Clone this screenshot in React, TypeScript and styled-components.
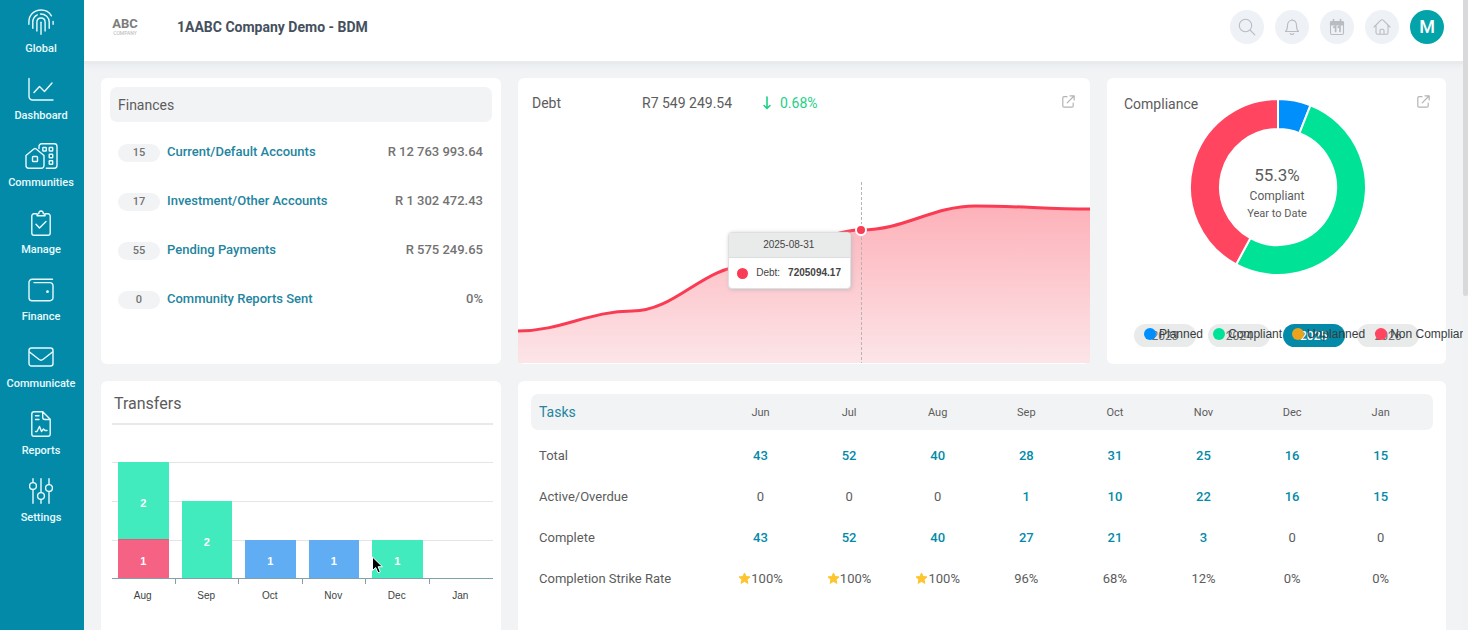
import React from 'react';
import styled, { createGlobalStyle } from 'styled-components';

const teal = '#038aa8';
const linkTeal = '#2385a0';
const ink = '#5c5c5c';
const ui = 'Roboto, "Liberation Sans", sans-serif';
const chartFont = '"Liberation Sans", Arial, sans-serif';

const GlobalStyle = createGlobalStyle`
  *, *::before, *::after { box-sizing: border-box; }
  body { margin: 0; background: #f1f3f5; font-family: ${ui}; color: ${ink}; }
  button { font: inherit; border: 0; padding: 0; cursor: pointer; }
  a { text-decoration: none; color: inherit; }
  h1, h2, p, ul { margin: 0; padding: 0; }
  ul { list-style: none; }
`;

const Shell = styled.div`
  display: flex;
  height: 100vh;
  overflow: hidden;
`;

const Sidebar = styled.nav`
  flex: none;
  width: 84px;
  background: ${teal};
  color: #e9fbff;
`;

const NavLink = styled.a`
  display: flex;
  flex-direction: column;
  align-items: center;
  gap: 7px;
  height: 67px;
  padding-top: 9px;
  padding-right: 2px;
  font-size: 11px;
  line-height: 14px;
  font-weight: 500;
  svg { height: 26px; flex: none; }
`;

const Page = styled.div`
  flex: 1;
  min-width: 0;
  display: flex;
  flex-direction: column;
  overflow: hidden;
`;

const TopBar = styled.header`
  flex: none;
  display: flex;
  align-items: center;
  height: 61px;
  padding: 0 19px 8px 28px;
  background: #fff;
  box-shadow: 0 3px 0 #e9eaeb, 0 4px 6px #e6e8ec;
`;

const Logo = styled.div`
  width: 26px;
  text-align: center;
  color: #7c7c7c;
  strong { display: block; font-size: 13px; line-height: 14px; }
  span { display: block; font-size: 5px; line-height: 5px; color: #b5b5b5; }
`;

const CompanyName = styled.h1`
  flex: 1;
  margin-left: 39px;
  font-size: 14px;
  line-height: 18px;
  font-weight: 700;
  color: #45505e;
`;

const Actions = styled.div`
  display: flex;
  gap: 11px;
`;

const RoundButton = styled.button<{ $avatar?: boolean }>`
  display: grid;
  place-items: center;
  width: 34px;
  height: 34px;
  border-radius: 50%;
  background: ${p => (p.$avatar ? '#02a4a9' : '#eef1f5')};
  color: ${p => (p.$avatar ? '#fff' : '#b9bdc1')};
  font-size: 18px;
  font-weight: 500;
`;

const Board = styled.main`
  display: grid;
  grid-template-columns: minmax(0, 400fr) minmax(0, 572fr) minmax(0, 339fr);
  grid-template-rows: 286px 286px;
  gap: 17px;
  padding: 17px;
`;

const Card = styled.section<{ $wide?: boolean }>`
  position: relative;
  display: flex;
  flex-direction: column;
  border-radius: 6px;
  background: #fff;
  min-width: 0;
  ${p => p.$wide && 'grid-column: span 2; padding: 13px;'}
`;

const CardTitle = styled.h2`
  font-size: 14px;
  line-height: 18px;
  font-weight: 400;
`;

const Band = styled(CardTitle)`
  margin: 9px 9px 6px;
  padding: 9px 8px 8px;
  border-radius: 7px;
  background: #f2f3f5;
`;

const AccountRow = styled.li`
  display: flex;
  align-items: center;
  gap: 7px;
  height: 49px;
  padding: 0 18px 0 17px;
  font-size: 13px;
  line-height: 16px;
  font-weight: 500;
  color: #737373;
  a { flex: 1; color: ${linkTeal}; padding-bottom: 2px; }
`;

const Amount = styled.span`
  padding-bottom: 2px;
`;

const Count = styled.span`
  width: 42px;
  border-radius: 9px;
  background: #f2f3f5;
  text-align: center;
  font-size: 11px;
  line-height: 18px;
`;

const DebtHeader = styled.div`
  display: flex;
  align-items: center;
  padding: 14px 15px 0 14px;
  font-size: 14px;
  line-height: 22px;
  height: 36px;
`;

const DebtTitle = styled(CardTitle)`
  width: 110px;
`;

const DebtAmount = styled.span`
  width: 120px;
`;

const Change = styled.span`
  flex: 1;
  display: flex;
  align-items: center;
  gap: 8px;
  color: #1cd087;
`;

const OpenLink = styled.a`
  display: block;
  height: 16px;
  color: #b4b4b4;
  svg { display: block; }
`;

const AreaChart = styled.div`
  position: relative;
  margin-top: auto;
  height: 181px;
  margin-bottom: 1px;
  > svg { display: block; width: 100%; height: 100%; }
`;

const Guide = styled.div`
  position: absolute;
  left: 60%;
  top: 0;
  bottom: 0;
  width: 1px;
  background: repeating-linear-gradient(#b9b3b6 0 3px, transparent 3px 5px);
`;

const Marker = styled.div`
  position: absolute;
  left: 60%;
  top: 48px;
  width: 12px;
  height: 12px;
  margin: -6px;
  border: 2px solid #fff;
  border-radius: 50%;
  background: #fa3b54;
`;

const Tooltip = styled.div`
  position: absolute;
  right: calc(40% + 10px);
  top: 50px;
  width: 123px;
  border: 1px solid #dfe0e0;
  border-radius: 4px;
  background: #fff;
  box-shadow: 1px 1px 4px #c9bcc0;
  overflow: hidden;
  font-family: ${chartFont};
  font-size: 10px;
  color: #444;
`;

const TooltipDate = styled.div`
  padding: 0 2px 0 0;
  background: #e9ebeb;
  border-bottom: 1px solid #dcdede;
  text-align: center;
  line-height: 24px;
`;

const TooltipValue = styled.div`
  display: flex;
  align-items: center;
  gap: 8px;
  padding-left: 8px;
  line-height: 30px;
  strong { font-weight: 700; }
`;

const Dot = styled.i<{ $color: string; $size: number }>`
  flex: none;
  width: ${p => p.$size}px;
  height: ${p => p.$size}px;
  border-radius: 50%;
  background: ${p => p.$color};
`;

const ComplianceTop = styled.div`
  display: grid;
  grid-template-columns: minmax(0, 1fr) 180px minmax(0, 1fr);
  padding: 17px 16px 0 17px;
  ${OpenLink} { justify-self: end; }
  ${CardTitle} { white-space: nowrap; }
`;

const Donut = styled.div`
  position: relative;
  height: 182px;
  svg { display: block; }
`;

const DonutLabel = styled.div`
  position: absolute;
  inset: 69px 0 0;
  text-align: center;
  font-size: 12px;
  line-height: 20px;
  strong { display: block; font-size: 17px; font-weight: 400; line-height: 22px; }
  span { display: block; font-size: 11px; line-height: 16px; }
`;

const Years = styled.div`
  display: flex;
  justify-content: space-between;
  margin: auto 27px 17px;
`;

const YearButton = styled.button<{ $active?: boolean }>`
  width: 62px;
  height: 23px;
  border-radius: 12px;
  background: ${p => (p.$active ? teal : '#e9ebeb')};
  color: ${p => (p.$active ? '#fff' : '#6d6d6d')};
  font-size: 12px;
  font-weight: ${p => (p.$active ? 500 : 400)};
`;

const Legend = styled.ul`
  position: absolute;
  left: 37px;
  bottom: 23px;
  display: flex;
  gap: 10px;
  font-family: ${chartFont};
  font-size: 12px;
  line-height: 14px;
  color: #373d3f;
  white-space: nowrap;
  li { display: flex; align-items: center; gap: 3px; }
`;

const TransfersTitle = styled.h2`
  margin: 0 8px 0 11px;
  padding: 13px 2px 10px;
  border-bottom: 2px solid #e8e9ea;
  font-size: 16px;
  line-height: 19px;
  font-weight: 400;
`;

const BarChart = styled.div`
  position: relative;
  margin: 37px 8px 0 11px;
  font-family: ${chartFont};
  font-size: 10px;
`;

const Plot = styled.div`
  display: flex;
  align-items: flex-end;
  height: 117px;
  border-bottom: 1px solid #7fa3ae;
  background: repeating-linear-gradient(#e3e5e6 0 1px, transparent 1px 39px);
`;

const Stack = styled.div`
  flex: 1;
  padding: 0 7px 0 6px;
`;

const Bar = styled.div<{ $color: string; $units: number }>`
  height: ${p => p.$units * 39 - 1}px;
  display: grid;
  place-items: center;
  padding-top: 4px;
  background: ${p => p.$color};
  color: #fff;
  font-size: 11px;
  font-weight: 700;
  & + & { border-top: 1px solid #d8607c; height: ${p => p.$units * 39}px; }
`;

const Axis = styled.div`
  display: flex;
`;

const AxisLabel = styled.span`
  position: relative;
  flex: 1;
  padding: 10px 2px 0 0;
  text-align: center;
  line-height: 14px;
  color: #3b3f42;
  &:not(:last-child)::after {
    content: '';
    position: absolute;
    right: 0;
    top: 0;
    width: 1px;
    height: 5px;
    background: #8f9da3;
  }
`;

const Pointer = styled.svg`
  position: absolute;
  left: 68%;
  top: 93px;
`;

const Table = styled.table`
  display: block;
  font-size: 13px;
  thead, tbody { display: block; }
  tbody { padding-top: 5px; }
  th { font-weight: 400; padding: 0; }
  td { padding: 0; }
`;

const Row = styled.tr<{ $head?: boolean }>`
  display: grid;
  grid-template-columns: minmax(0, 2fr) repeat(8, minmax(0, 1fr));
  align-items: center;
  height: ${p => (p.$head ? 36 : 41)}px;
  padding: 0 8px;
  border-radius: 7px;
  background: ${p => (p.$head ? '#f2f3f5' : 'transparent')};
  text-align: center;
  font-size: ${p => (p.$head ? 11 : 13)}px;
  th:first-child { text-align: left; }
  a { color: ${teal}; font-weight: 500; }
`;

const TasksLink = styled.a`
  && { font-size: 14px; font-weight: 400; color: ${linkTeal}; }
`;

const Rate = styled.td`
  display: flex;
  justify-content: center;
  align-items: center;
`;

const ScrollTrack = styled.div`
  flex: none;
  width: 5px;
  background: #f1f2f3;
`;

const ScrollThumb = styled.div`
  height: 47%;
  border-radius: 0 0 3px 3px;
  background: #d8d9da;
`;

const line = {
  fill: 'none',
  stroke: 'currentColor',
  strokeWidth: 1.4,
  strokeLinecap: 'round' as const,
  strokeLinejoin: 'round' as const,
};

const icons: Record<string, React.ReactNode> = {
  Global: (
    <svg width="26" height="26" viewBox="0 0 26 26" {...line}>
      <path d="M.9 15.200V12.800C.9 6 6.200 1 13 1c4.600 0 8.400 2.200 10.400 5.800M25.100 12.400v2.800" />
      <path d="M4.800 19.300v-6.200c0-3.200 1.800-5.900 4.500-7.200M12.500 5c5 0 8.700 3.300 8.700 8.100v6.200" />
      <path d="M8.900 22v-8.800c0-2.500 1.700-4.200 4.100-4.200s4.100 1.700 4.100 4.200V22" />
      <path d="M13 13.200V25.300" />
    </svg>
  ),
  Dashboard: (
    <svg width="26" height="26" viewBox="0 0 26 26" {...line}>
      <path d="M1 2.500v18a3.500 3.500 0 0 0 3.500 3.500H25M6 16.500l5.500-6 5 5 7.500-8.500" />
    </svg>
  ),
  Communities: (
    <svg width="33" height="26" viewBox="0 0 33 26" {...line}>
      <path d="M1 12.500 8.800 6a2 2 0 0 1 2.400 0L19 12.500v10a2.700 2.700 0 0 1-2.700 2.700H3.700A2.700 2.700 0 0 1 1 22.500zM14 5.500V3.500A2.700 2.700 0 0 1 16.700.8h12.600A2.700 2.700 0 0 1 32 3.500v19a2.700 2.700 0 0 1-2.700 2.700h-8" />
      <rect x="7.500" y="13.500" width="5" height="5" rx=".8" />
      <rect x="17.800" y="4.500" width="3.500" height="3.500" rx=".5" />
      <rect x="24.200" y="4.500" width="3.500" height="3.500" rx=".5" />
      <rect x="24.200" y="11.200" width="3.500" height="3.500" rx=".5" />
      <rect x="24.200" y="17.800" width="3.500" height="3.500" rx=".5" />
    </svg>
  ),
  Manage: (
    <svg width="20" height="26" viewBox="0 0 20 26" {...line}>
      <path d="M5.500 3.800H3A2.200 2.200 0 0 0 .8 6v17A2.200 2.200 0 0 0 3 25.200h14a2.200 2.200 0 0 0 2.200-2.200V6A2.200 2.200 0 0 0 17 3.800h-2.500M6 5.800c0-1.600.8-2.200 1.900-2.200a2.200 2.200 0 1 1 4.300 0c1.200 0 1.900.7 1.900 2.200zM5 14.200l3.500 3.800 6.500-6.500" />
    </svg>
  ),
  Finance: (
    <svg width="26" height="26" viewBox="0 0 26 26" {...line}>
      <path d="M24.500 2.300H4A3 3 0 0 0 1 5.300v15.400a3 3 0 0 0 3 3h18a3 3 0 0 0 3-3V8.600a3 3 0 0 0-3-3H6" />
      <circle cx="19.500" cy="14.700" r=".7" fill="currentColor" />
    </svg>
  ),
  Communicate: (
    <svg width="26" height="26" viewBox="0 0 26 26" {...line}>
      <rect x="1" y="4" width="24" height="18" rx="2.500" />
      <path d="m1.500 8 9.300 7.300a3.500 3.500 0 0 0 4.400 0L24.500 8" />
    </svg>
  ),
  Reports: (
    <svg width="20" height="26" viewBox="0 0 20 26" {...line}>
      <path d="M12 .8H3A2.200 2.200 0 0 0 .8 3v20A2.200 2.200 0 0 0 3 25.200h14a2.200 2.200 0 0 0 2.200-2.200V8.300L11.700.8v5.500a2.200 2.200 0 0 0 2.200 2.200h5M4.500 4.800H8M4.500 8.500H8M4.500 20.500h1.500l2.500-5 2 5 2-2.500 1.500 1.500h2" />
    </svg>
  ),
  Settings: (
    <svg width="24" height="26" viewBox="0 0 24 26" {...line}>
      <path d="M4 .8v3.700M4 11.500v13.700M12 .8v13.700M12 21.500v3.700M20 .8v5.700M20 13.500v11.700" />
      <circle cx="4" cy="8" r="3.400" />
      <circle cx="12" cy="18" r="3.400" />
      <circle cx="20" cy="10" r="3.400" />
    </svg>
  ),
};

const thin = { ...line, strokeWidth: 1.1 };

const SearchIcon = () => (
  <svg width="18" height="18" viewBox="0 0 18 18" {...thin}>
    <circle cx="7.500" cy="7.500" r="6.200" />
    <path d="m12 12 4.800 4.800" />
  </svg>
);

const BellIcon = () => (
  <svg width="16" height="18" viewBox="0 0 16 18" {...thin}>
    <path d="M8 1.200v1M1.500 13.500c1.600-1.300 2-2.500 2-6C3.500 4.400 5.300 2.300 8 2.300s4.500 2.100 4.500 5.200c0 3.500.4 4.700 2 6zM6.200 15.500c.4 1.200 3.200 1.200 3.600 0" />
  </svg>
);

const CalendarIcon = () => (
  <svg width="16" height="18" viewBox="0 0 16 18" {...thin}>
    <rect x="1.500" y="3.500" width="13" height="13" rx="1.500" />
    <path d="M1.500 4h13v3h-13z" fill="currentColor" />
    <path d="M4.500 1.500V4M11.500 1.500V4" strokeWidth="1.600" />
    <path d="M4.800 9.200 6.600 8v5.500M9.200 9.200 11 8v5.500" strokeWidth="1.700" />
  </svg>
);

const HomeIcon = () => (
  <svg width="18" height="18" viewBox="0 0 18 18" {...thin}>
    <path d="M1 9 7.900 2.200a1.500 1.500 0 0 1 2.200 0L17 9M3 7.500v7A1.800 1.800 0 0 0 4.800 16.300h8.400a1.800 1.800 0 0 0 1.800-1.800v-7M7 16v-3.500c0-.8.500-1.300 1.300-1.300h1.400c.8 0 1.300.5 1.300 1.300V16" />
  </svg>
);

const OpenIcon = () => (
  <svg width="13" height="13" viewBox="0 0 13 13" {...line} strokeWidth={1.2}>
    <path d="M5 1.700H2A1.200 1.200 0 0 0 .8 2.900V11A1.200 1.200 0 0 0 2 12.200h8A1.200 1.200 0 0 0 11.200 11V8M5.200 7.800 12 1M8 .8h4.200V5" />
  </svg>
);

const StarIcon = () => (
  <svg width="13" height="13" viewBox="0 0 13 13" aria-hidden="true">
    <path
      d="m6.500 1 1.600 3.500 3.900.4-2.900 2.600.8 3.900-3.400-2-3.400 2 .8-3.900L1 4.900l3.900-.4z"
      fill="#fdc62f"
      stroke="#fdc62f"
      strokeWidth="1"
      strokeLinejoin="round"
    />
  </svg>
);

const accounts = [
  ['15', 'Current/Default Accounts', 'R 12 763 993.64'],
  ['17', 'Investment/Other Accounts', 'R 1 302 472.43'],
  ['55', 'Pending Payments', 'R 575 249.65'],
  ['0', 'Community Reports Sent', '0%'],
];

const debtPoints = [
  [0, 149], [114.400, 129], [228.800, 84], [343.200, 48], [457.600, 24], [572, 27],
];

const debtLine = debtPoints.reduce((path, [x, y], i) => {
  if (i === 0) return `M${x} ${y}`;
  const [px, py] = debtPoints[i - 1];
  const reach = (x - px) * 0.38;
  return `${path}C${px + reach} ${py} ${x - reach} ${y} ${x} ${y}`;
}, '');

const slices = [
  { color: '#008ffb', from: 0, to: 21.7 },
  { color: '#00e396', from: 21.7, to: 208.4 },
  { color: '#ff4560', from: 208.4, to: 360 },
];

const polar = (deg: number, r: number) => {
  const a = (deg * Math.PI) / 180;
  return `${91 + r * Math.sin(a)} ${92 - r * Math.cos(a)}`;
};

const slicePath = (from: number, to: number) => {
  const large = to - from > 180 ? 1 : 0;
  return `M${polar(from, 88)}A88 88 0 ${large} 1 ${polar(to, 88)}L${polar(to, 58)}A58 58 0 ${large} 0 ${polar(from, 58)}Z`;
};

const legend = [
  ['#008ffb', 'Planned'],
  ['#00e396', 'Compliant'],
  ['#eba31d', 'Unplanned'],
  ['#ff4560', 'Non Compliant'],
];

const green = '#42ebbd';
const red = '#f66284';
const blue = '#61adf4';

const transfers: { month: string; bars: [string, number][] }[] = [
  { month: 'Aug', bars: [[green, 2], [red, 1]] },
  { month: 'Sep', bars: [[green, 2]] },
  { month: 'Oct', bars: [[blue, 1]] },
  { month: 'Nov', bars: [[blue, 1]] },
  { month: 'Dec', bars: [[green, 1]] },
  { month: 'Jan', bars: [] },
];

const months = ['Jun', 'Jul', 'Aug', 'Sep', 'Oct', 'Nov', 'Dec', 'Jan'];

const tasks = [
  { name: 'Total', values: [43, 52, 40, 28, 31, 25, 16, 15] },
  { name: 'Active/Overdue', values: [0, 0, 0, 1, 10, 22, 16, 15] },
  { name: 'Complete', values: [43, 52, 40, 27, 21, 3, 0, 0] },
];

const rates = [100, 100, 100, 96, 68, 12, 0, 0];

export default function App() {
  return (
    <Shell>
      <GlobalStyle />
      <Sidebar aria-label="Main">
        {Object.entries(icons).map(([name, icon]) => (
          <NavLink key={name} href="#">
            {icon}
            {name}
          </NavLink>
        ))}
      </Sidebar>

      <Page>
        <TopBar>
          <Logo>
            <strong>ABC</strong>
            <span>COMPANY</span>
          </Logo>
          <CompanyName>1AABC Company Demo - BDM</CompanyName>
          <Actions>
            <RoundButton aria-label="Search"><SearchIcon /></RoundButton>
            <RoundButton aria-label="Notifications"><BellIcon /></RoundButton>
            <RoundButton aria-label="Calendar"><CalendarIcon /></RoundButton>
            <RoundButton aria-label="Home"><HomeIcon /></RoundButton>
            <RoundButton $avatar>M</RoundButton>
          </Actions>
        </TopBar>

        <Board>
          <Card>
            <Band>Finances</Band>
            <ul>
              {accounts.map(([count, name, amount]) => (
                <AccountRow key={name}>
                  <Count>{count}</Count>
                  <a href="#">{name}</a>
                  <Amount>{amount}</Amount>
                </AccountRow>
              ))}
            </ul>
          </Card>

          <Card>
            <DebtHeader>
              <DebtTitle>Debt</DebtTitle>
              <DebtAmount>R7 549 249.54</DebtAmount>
              <Change>
                <svg width="10" height="14" viewBox="0 0 10 14" {...line} strokeWidth={1.6}>
                  <path d="M5 1v11M2 9.500l3 3 3-3" />
                </svg>
                0.68%
              </Change>
              <OpenLink href="#" aria-label="Open debt"><OpenIcon /></OpenLink>
            </DebtHeader>
            <AreaChart>
              <svg viewBox="0 0 572 181" preserveAspectRatio="none">
                <defs>
                  <linearGradient id="debtFill" x1="0" y1="0" x2="0" y2="1">
                    <stop offset="0" stopColor="#fdb1b9" />
                    <stop offset="1" stopColor="#fce5e8" />
                  </linearGradient>
                </defs>
                <path d={`${debtLine}V181H0Z`} fill="url(#debtFill)" />
                <path d={debtLine} fill="none" stroke="#fa3b54" strokeWidth="3" />
              </svg>
              <Guide />
              <Marker />
              <Tooltip>
                <TooltipDate>2025-08-31</TooltipDate>
                <TooltipValue>
                  <Dot $color="#fa3b54" $size={11} />
                  <span>Debt:</span>
                  <strong>7205094.17</strong>
                </TooltipValue>
              </Tooltip>
            </AreaChart>
          </Card>

          <Card>
            <ComplianceTop>
              <CardTitle>Compliance</CardTitle>
              <Donut>
                <svg width="180" height="182" viewBox="0 0 180 182">
                  {slices.map(s => (
                    <path key={s.color} d={slicePath(s.from, s.to)} fill={s.color} stroke="#fff" strokeWidth="2" />
                  ))}
                </svg>
                <DonutLabel>
                  <strong>55.3%</strong>
                  Compliant
                  <span>Year to Date</span>
                </DonutLabel>
              </Donut>
              <OpenLink href="#" aria-label="Open compliance"><OpenIcon /></OpenLink>
            </ComplianceTop>
            <Years>
              {[2023, 2024, 2025, 2026].map(year => (
                <YearButton key={year} $active={year === 2025}>{year}</YearButton>
              ))}
            </Years>
            <Legend>
              {legend.map(([color, label]) => (
                <li key={label}>
                  <Dot $color={color} $size={12} />
                  {label}
                </li>
              ))}
            </Legend>
          </Card>

          <Card>
            <TransfersTitle>Transfers</TransfersTitle>
            <BarChart>
              <Plot>
                {transfers.map(({ month, bars }) => (
                  <Stack key={month}>
                    {bars.map(([color, units]) => (
                      <Bar key={color} $color={color} $units={units}>{units}</Bar>
                    ))}
                  </Stack>
                ))}
              </Plot>
              <Axis>
                {transfers.map(({ month }) => (
                  <AxisLabel key={month}>{month}</AxisLabel>
                ))}
              </Axis>
              <Pointer width="13" height="20" viewBox="0 0 13 20" aria-hidden="true">
                <path
                  d="M1.500 2v13.500l3.200-3 2.300 5.300 2.300-1-2.200-5.100h4.300z"
                  fill="#000"
                  stroke="#fff"
                  strokeWidth="1"
                />
              </Pointer>
            </BarChart>
          </Card>

          <Card $wide>
            <Table>
              <thead>
                <Row $head>
                  <th scope="col"><TasksLink href="#">Tasks</TasksLink></th>
                  {months.map(m => <th key={m} scope="col">{m}</th>)}
                </Row>
              </thead>
              <tbody>
                {tasks.map(({ name, values }) => (
                  <Row key={name}>
                    <th scope="row">{name}</th>
                    {values.map((v, i) => (
                      <td key={months[i]}>{v ? <a href="#">{v}</a> : v}</td>
                    ))}
                  </Row>
                ))}
                <Row>
                  <th scope="row">Completion Strike Rate</th>
                  {rates.map((r, i) => (
                    <Rate key={months[i]}>
                      {r === 100 && <StarIcon />}
                      {r}%
                    </Rate>
                  ))}
                </Row>
              </tbody>
            </Table>
          </Card>
        </Board>
      </Page>

      <ScrollTrack aria-hidden="true">
        <ScrollThumb />
      </ScrollTrack>
    </Shell>
  );
}
